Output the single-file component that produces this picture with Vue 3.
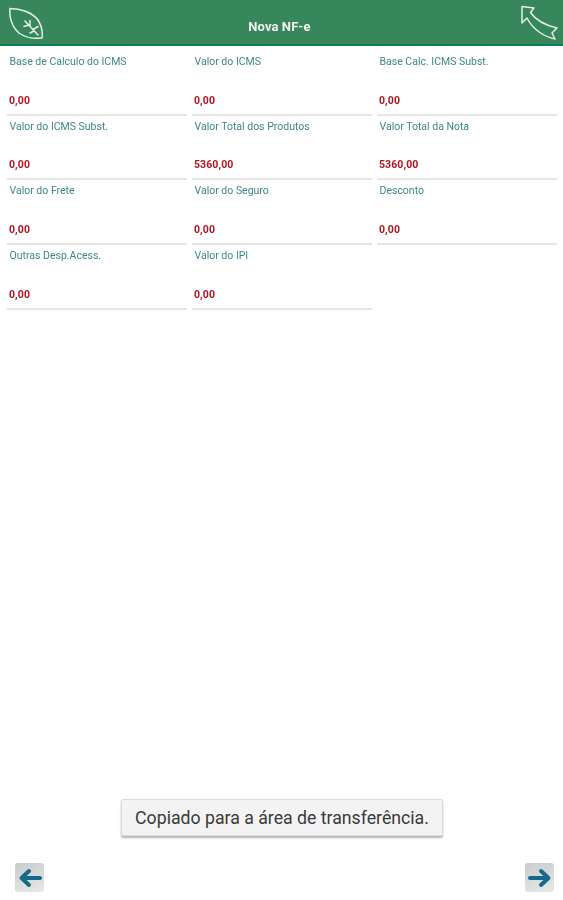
<script setup>
const fields = [
  { label: 'Base de Calculo do ICMS', value: '0,00' },
  { label: 'Valor do ICMS', value: '0,00' },
  { label: 'Base Calc. ICMS Subst.', value: '0,00' },
  { label: 'Valor do ICMS Subst.', value: '0,00' },
  { label: 'Valor Total dos Produtos', value: '5360,00' },
  { label: 'Valor Total da Nota', value: '5360,00' },
  { label: 'Valor do Frete', value: '0,00' },
  { label: 'Valor do Seguro', value: '0,00' },
  { label: 'Desconto', value: '0,00' },
  { label: 'Outras Desp.Acess.', value: '0,00' },
  { label: 'Valor do IPI', value: '0,00' },
];
</script>

<template>
  <div class="page">
    <header class="topbar">
      <svg class="leaf" width="36" height="34" viewBox="0 0 36 34" fill="none" stroke="#e4f0e8" stroke-width="1.5" stroke-linejoin="round" stroke-linecap="round">
        <path d="M2 2.500C12 2.500 24 6 30 14C33 19 35 26 34 32C26 33 18 32 11 27C4 21 1 11 2 2.500Z" />
        <path d="M17 15L30 29M22 20L22 14.500M25 23.500L30 20.500M21 19L16 20.500M26 25L22 27" />
      </svg>
      <h1 class="title">Nova NF-e</h1>
      <svg class="back" width="40" height="36" viewBox="0 0 40 36" fill="none" stroke="#e4f0e8" stroke-width="1.5" stroke-linejoin="round">
        <path d="M4 1.500L16 3L12.500 7.500C17 14 26 20 39 23L34 28L37 34C27 32 15 25 9 13L4 18Z" />
      </svg>
    </header>

    <section class="grid">
      <div v-for="field in fields" :key="field.label" class="cell">
        <span class="label">{{ field.label }}</span>
        <span class="value">{{ field.value }}</span>
      </div>
    </section>

    <footer class="nav">
      <button class="nav-btn" type="button" aria-label="Anterior">
        <svg width="24" height="20" viewBox="0 0 24 20" fill="none" stroke="#17698a" stroke-width="4" stroke-linejoin="round" stroke-linecap="round">
          <path d="M22 10H5M11 3L3.500 10L11 17" />
        </svg>
      </button>
      <button class="nav-btn" type="button" aria-label="Próximo">
        <svg width="24" height="20" viewBox="0 0 24 20" fill="none" stroke="#17698a" stroke-width="4" stroke-linejoin="round" stroke-linecap="round">
          <path d="M2 10H19M13 3L20.500 10L13 17" />
        </svg>
      </button>
    </footer>

    <div class="toast">Copiado para a área de transferência.</div>
  </div>
</template>

<style>
html,
body {
  margin: 0;
  background: #fff;
}
</style>

<style scoped>
.page {
  position: relative;
  width: 563px;
  height: 900px;
  display: flex;
  flex-direction: column;
  background: #fff;
  font-family: Roboto, "Liberation Sans", sans-serif;
  overflow: hidden;
}

.topbar {
  height: 44px;
  flex: none;
  display: flex;
  align-items: flex-start;
  justify-content: space-between;
  padding: 0 5px 0 8px;
  background: #38865c;
  border-bottom: 2px solid #0f7d52;
}

.leaf {
  margin-top: 6px;
  filter: blur(0.4px);
}

.back {
  margin-top: 5px;
  filter: blur(0.4px);
}

.title {
  margin: 19px 3px 0 0;
  font-size: 13px;
  line-height: 16px;
  font-weight: 700;
  letter-spacing: 0.1px;
  color: #eef6f1;
  filter: blur(0.4px);
}

.grid {
  display: grid;
  grid-template-columns: repeat(3, 180px);
  grid-auto-rows: 64.67px;
  column-gap: 5px;
  padding: 5px 6px 0 7px;
}

.cell {
  display: flex;
  flex-direction: column;
  justify-content: space-between;
  padding: 5px 2.5px 7px;
  box-sizing: border-box;
  border-bottom: 2px solid #e3e6e5;
  filter: blur(0.45px);
}

.label {
  font-size: 10.5px;
  line-height: 12px;
  color: #3b8789;
}

.value {
  margin-left: -0.5px;
  font-size: 10.5px;
  line-height: 12px;
  font-weight: 700;
  letter-spacing: 0.1px;
  color: #b3151f;
}

.nav {
  margin-top: auto;
  display: flex;
  justify-content: space-between;
  padding: 0 9px 8px 15px;
}

.nav-btn {
  width: 29px;
  height: 29px;
  padding: 0;
  display: flex;
  align-items: center;
  justify-content: center;
  border: none;
  border-radius: 3px;
  background: linear-gradient(160deg, #c9cccc, #e8e9e9);
  filter: blur(0.4px);
}

.toast {
  position: absolute;
  left: 121px;
  top: 799px;
  width: 322px;
  height: 37px;
  box-sizing: border-box;
  display: flex;
  align-items: center;
  justify-content: center;
  font-size: 17.7px;
  color: #3a3a3a;
  background: #f3f3f3;
  border: 1px solid #dcdcdc;
  border-radius: 2px;
  box-shadow: 0 2px 2px #b5b5b5;
}
</style>
